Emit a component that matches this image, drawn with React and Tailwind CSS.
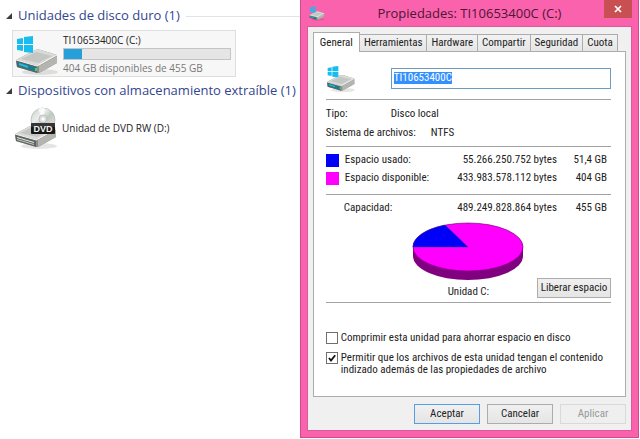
import React, { useState } from 'react';

const tabs = ['General', 'Herramientas', 'Hardware', 'Compartir', 'Seguridad', 'Cuota'];

const usage = [
  { label: 'Espacio usado:', color: 'bg-[#0000f8]', bytes: '55.266.250.752 bytes', size: '51,4 GB' },
  { label: 'Espacio disponible:', color: 'bg-[#ff00ff]', bytes: '433.983.578.112 bytes', size: '404 GB' },
];

const DriveBody = () => (
  <g>
    <ellipse cx="25" cy="39" rx="18" ry="3" fill="#000" opacity="0.1" />
    <path d="M1 27 L20 17 Q23 16 26 17 L42 22 V30 L26 39 Q23 41 20 39 L2 34 Z" fill="#8b8d8b" />
    <path d="M1 27 L20 17 Q23 16 26 17 L42 22 L25 32 Q23 33 20 32 Z" fill="#d9dad8" />
    <path d="M6 26 L21 19 L37 23 L23 30 Z" fill="#c4c6c4" />
    <path d="M1 27 L22 33 V40 L2 34 Z" fill="#5d6462" />
    <path d="M24 33 L42 23 V30 L24 40 Z" fill="#b4b5b1" />
    <path d="M1 27 L22 33 L42 22" fill="none" stroke="#f7f7f5" strokeWidth="1" />
  </g>
);

const WindowsDrive = ({ className }) => (
  <svg viewBox="0 0 44 42" className={className} aria-hidden="true">
    <DriveBody />
    <path d="M3 29 L20 34 V38 L3 33 Z" fill="#167e9c" />
    <path d="M4 30 L13 33 V35 L4 32 Z" fill="#35b7ce" />
    <path d="M20 35 h2 v3 h-2 z" fill="#46d66a" />
    <path d="M2 6 L8 5 V11 H2 Z M9 4 L18 3 V11 H9 Z M2 12 H8 V18 L2 17 Z M9 12 H18 V20 L9 19 Z" fill="#18bdf0" />
  </svg>
);

const DvdDrive = ({ className }) => (
  <svg viewBox="0 0 44 42" className={className} aria-hidden="true">
    <defs>
      <linearGradient id="disc" x1="0" y1="0" x2="1" y2="1">
        <stop offset="0" stopColor="#c9cccb" />
        <stop offset="0.35" stopColor="#eceeed" />
        <stop offset="0.55" stopColor="#b9cdbb" />
        <stop offset="0.75" stopColor="#e0d3dc" />
        <stop offset="1" stopColor="#b2b5b4" />
      </linearGradient>
    </defs>
    <DriveBody />
    <path d="M3 30 L20 35 V36 L3 31 Z" fill="#eeeeec" />
    <path d="M3 32 L20 37 V38 L3 33 Z" fill="#c5c6c4" />
    <circle cx="29" cy="13" r="12" fill="url(#disc)" stroke="#a9adab" strokeWidth="0.6" />
    <path d="M29 13 L24 2 A12 12 0 0 1 31 1 Z" fill="#fff" opacity="0.8" />
    <circle cx="29" cy="12" r="4" fill="#dedfde" stroke="#aeb1b0" strokeWidth="0.7" />
    <circle cx="29" cy="12" r="1.6" fill="#fff" />
    <rect x="17" y="16" width="24" height="11" rx="1" fill="#161616" />
    <rect x="17" y="16" width="24" height="4" fill="#444" opacity="0.7" />
    <text x="29" y="25" textAnchor="middle" fontSize="9" fontWeight="700" fill="#f2f2f2" className="font-['Liberation_Sans',sans-serif]">DVD</text>
  </svg>
);

const Group = ({ title, line, children }) => (
  <section>
    <h2 className="flex h-6 items-center whitespace-nowrap text-[13px] text-[#34468f]">
      <svg viewBox="0 0 6 6" className="mr-1.5 ml-1.5 size-1.5 shrink-0" aria-hidden="true">
        <path d="M6 0 V6 H0 Z" fill="#3c3c3c" />
      </svg>
      {title}
      {line && <span className="ml-1.5 h-px flex-1 bg-[#e2e2e8]" />}
    </h2>
    {children}
  </section>
);

const Rule = () => <hr className="border-[#a3a3a3]" />;

const Pie = () => (
  <svg viewBox="0 0 112 60" className="h-[60px] w-28" role="img" aria-label="Unidad C:">
    <path d="M1 25 V34 A55 24 0 0 0 111 34 V25 Z" fill="#800080" />
    <ellipse cx="56" cy="25" rx="55" ry="24" fill="#ff00ff" stroke="#800080" strokeWidth="0.7" />
    <path d="M56 25 H1 A55 24 0 0 1 33 3 Z" fill="#0000f8" stroke="#30308a" strokeWidth="0.5" />
  </svg>
);

const Explorer = () => (
  <main className="min-w-0 flex-1 pt-1 font-['Open_Sans','Noto_Sans',sans-serif]">
    <Group title="Unidades de disco duro (1)" line>
      <div className="mt-0.5 mr-16 ml-3 flex h-[47px] items-center border border-[#dedede] bg-[#f7f7f7] pr-1 pl-0.5">
        <WindowsDrive className="mr-1 h-[42px] w-11 shrink-0" />
        <div className="min-w-0 flex-1 whitespace-nowrap text-[10px] leading-4">
          <p className="text-[#222]">TI10653400C (C:)</p>
          <div className="h-3 border border-[#c4c4c4] bg-[#e5e5e5]">
            <div className="h-full w-[11%] bg-[#26a0da]" />
          </div>
          <p className="text-[#777]">404 GB disponibles de 455 GB</p>
        </div>
      </div>
    </Group>
    <div className="mt-0.5">
      <Group title="Dispositivos con almacenamiento extraíble (1)">
        <div className="mt-1 ml-3 flex items-center pl-0.5">
          <DvdDrive className="mr-1 h-[42px] w-11 shrink-0" />
          <p className="text-[10px] text-[#222]">Unidad de DVD RW (D:)</p>
        </div>
      </Group>
    </div>
  </main>
);

const Check = ({ checked, onChange }) => (
  <span className="grid size-3 shrink-0">
    <input
      type="checkbox"
      checked={checked}
      onChange={(e) => onChange(e.target.checked)}
      className="col-start-1 row-start-1 size-3 appearance-none border border-[#707070] bg-white"
    />
    {checked && (
      <svg viewBox="0 0 12 12" className="pointer-events-none col-start-1 row-start-1 size-3" aria-hidden="true">
        <path d="M3 6 L5 8.6 L9.2 3.2" fill="none" stroke="#111" strokeWidth="1.8" />
      </svg>
    )}
  </span>
);

const Properties = () => {
  const [name, setName] = useState('TI10653400C');
  const [compress, setCompress] = useState(false);
  const [index, setIndex] = useState(true);

  return (
    <section className="mr-px w-[53%] shrink-0 border border-t-0 border-[#d04b8c] bg-[#fb62ae] px-1.5 pb-1.5 font-['Roboto_Condensed','Roboto',sans-serif] text-[11px] leading-3 whitespace-nowrap text-[#222]">
      <header className="flex h-[26px] items-center">
        <WindowsDrive className="ml-0.5 size-4" />
        <h1 className="flex-1 pl-2.5 text-center font-['Open_Sans',sans-serif] text-[13px] text-[#4b1733]">
          Propiedades: TI10653400C (C:)
        </h1>
        <button aria-label="Cerrar" className="mb-2 flex h-[18px] w-7 items-center justify-center bg-[#c84f52]">
          <svg viewBox="0 0 8 8" className="size-2" aria-hidden="true">
            <path d="M1 1 L7 7 M7 1 L1 7" stroke="#fff" strokeWidth="1.7" />
          </svg>
        </button>
      </header>

      <div className="border border-[#d95b99] bg-[#f0f0f0] px-[5px] pt-[5px] pb-1.5">
        <nav className="flex items-end">
          {tabs.map((tab, i) => (
            <button
              key={tab}
              className={
                i === 0
                  ? 'relative -mb-px h-5 border border-b-0 border-[#acacac] bg-white px-1.5'
                  : 'h-[17px] border border-b-0 border-l-0 border-[#acacac] bg-gradient-to-b from-[#f2f2f2] to-[#e6e6e6] px-1'
              }
            >
              {tab}
            </button>
          ))}
        </nav>

        <div className="border border-[#acacac] bg-white pt-3 pr-3.5 pb-5 pl-3">
          <div className="mb-[7px] flex items-center">
            <WindowsDrive className="mr-[35px] h-7 w-[30px]" />
            <div className="flex h-[21px] flex-1 items-center border border-[#6b9cc4] px-0.5">
              <input
                aria-label="Nombre de la unidad"
                value={name}
                onChange={(e) => setName(e.target.value)}
                className="field-sizing-content bg-[#3390ff] text-white outline-none"
              />
            </div>
          </div>
          <Rule />
          <dl className="py-1 leading-[19px]">
            <div className="flex">
              <dt className="w-[65px]">Tipo:</dt>
              <dd>Disco local</dd>
            </div>
            <div className="flex">
              <dt className="w-[105px]">Sistema de archivos:</dt>
              <dd>NTFS</dd>
            </div>
          </dl>
          <Rule />
          <table className="mt-1 mb-[7px] w-full">
            <tbody>
              {usage.map((row) => (
                <tr key={row.label} className="h-[18px]">
                  <td className="w-[19px]">
                    <div className={`size-[13px] ${row.color}`} />
                  </td>
                  <th scope="row" className="text-left font-normal">{row.label}</th>
                  <td className="text-right">{row.bytes}</td>
                  <td className="w-[54px] pr-1 text-right">{row.size}</td>
                </tr>
              ))}
            </tbody>
          </table>
          <Rule />
          <div className="mt-[7px] flex h-3 pl-[18px]">
            <span className="flex-1">Capacidad:</span>
            <span>489.249.828.864 bytes</span>
            <span className="w-[54px] pr-1 text-right">455 GB</span>
          </div>
          <div className="mt-2 grid grid-cols-[1fr_112px_1fr] items-end pb-1">
            <div className="col-start-2 text-center">
              <Pie />
              <p className="mt-1">Unidad C:</p>
            </div>
            <button className="h-5 w-[74px] justify-self-end border border-[#acacac] bg-gradient-to-b from-[#f0f0f0] to-[#e5e5e5]">
              Liberar espacio
            </button>
          </div>
          <Rule />
          <div className="mt-[29px] flex flex-col gap-2">
            <label className="flex items-start gap-[3px]">
              <Check checked={compress} onChange={setCompress} />
              Comprimir esta unidad para ahorrar espacio en disco
            </label>
            <label className="flex items-start gap-[3px]">
              <Check checked={index} onChange={setIndex} />
              <span>
                Permitir que los archivos de esta unidad tengan el contenido
                <br />
                indizado además de las propiedades de archivo
              </span>
            </label>
          </div>
        </div>

        <footer className="mt-[7px] flex justify-end gap-[7px]">
          <button className="h-5 w-[66px] border border-[#569de5] bg-gradient-to-b from-[#f0f0f0] to-[#e5e5e5]">Aceptar</button>
          <button className="h-5 w-[66px] border border-[#acacac] bg-gradient-to-b from-[#f0f0f0] to-[#e5e5e5]">Cancelar</button>
          <button disabled className="h-5 w-[66px] border border-[#d9d9d9] bg-[#efefef] text-[#999]">Aplicar</button>
        </footer>
      </div>
    </section>
  );
};

const App = () => (
  <div className="flex items-start bg-white">
    <Explorer />
    <Properties />
  </div>
);

export default App;
